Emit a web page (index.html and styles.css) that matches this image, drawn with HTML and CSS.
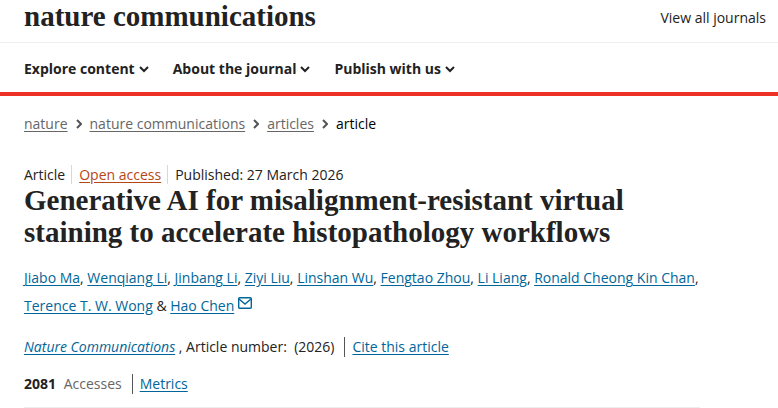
FILE: index.html
```
<!DOCTYPE html>
<html lang="en">
<head>
	<meta charset="utf-8">
	<meta name="viewport" content="width=device-width, initial-scale=1">
	<title>Generative AI for misalignment-resistant virtual staining to accelerate histopathology workflows | Nature Communications</title>
	<link rel="stylesheet" href="styles.css">
</head>
<body>
	<header class="header">
		<div class="header-top">
			<a class="logo" href="#">nature communications</a>
			<a class="all-journals" href="#">View all journals</a>
		</div>
		<nav class="header-menu">
			<button type="button" class="menu-button">Explore content
				<svg class="menu-chevron" viewBox="0 0 10 7" aria-hidden="true"><path d="M1 1l4 4 4-4"/></svg>
			</button>
			<button type="button" class="menu-button">About the journal
				<svg class="menu-chevron" viewBox="0 0 10 7" aria-hidden="true"><path d="M1 1l4 4 4-4"/></svg>
			</button>
			<button type="button" class="menu-button">Publish with us
				<svg class="menu-chevron" viewBox="0 0 10 7" aria-hidden="true"><path d="M1 1l4 4 4-4"/></svg>
			</button>
		</nav>
	</header>

	<nav class="breadcrumbs" aria-label="breadcrumbs">
		<a href="#">nature</a>
		<svg class="crumb-chevron" viewBox="0 0 6 10" aria-hidden="true"><path d="M1 1l4 4-4 4"/></svg>
		<a href="#">nature communications</a>
		<svg class="crumb-chevron" viewBox="0 0 6 10" aria-hidden="true"><path d="M1 1l4 4-4 4"/></svg>
		<a href="#">articles</a>
		<svg class="crumb-chevron" viewBox="0 0 6 10" aria-hidden="true"><path d="M1 1l4 4-4 4"/></svg>
		<span class="crumb-current">article</span>
	</nav>

	<main class="article">
		<ul class="identifiers">
			<li>Article</li>
			<li><a class="open-access" href="#">Open access</a></li>
			<li>Published: <time datetime="2026-03-27">27 March 2026</time></li>
		</ul>
		<h1 class="title">Generative AI for misalignment-resistant virtual staining to accelerate histopathology workflows</h1>
		<p class="authors">
			<a href="#">Jiabo Ma</a>, <a href="#">Wenqiang Li</a>, <a href="#">Jinbang Li</a>, <a href="#">Ziyi Liu</a>, <a href="#">Linshan Wu</a>, <a href="#">Fengtao Zhou</a>, <a href="#">Li Liang</a>, <a href="#">Ronald Cheong Kin Chan</a>, <a href="#">Terence T. W. Wong</a> &amp; <a href="#">Hao Chen</a><svg class="mail" viewBox="0 0 14 12" aria-hidden="true"><rect x="0.7" y="0.7" width="12.6" height="10.6" rx="1"/><path d="M1 2l6 5 6-5"/></svg>
		</p>
		<div class="info">
			<p><a href="#"><i>Nature Communications</i></a> , Article number:&nbsp; (2026)</p>
			<span class="info-link"><a href="#">Cite this article</a></span>
		</div>
		<div class="info">
			<p><strong>2081</strong> <span class="metrics-label">Accesses</span></p>
			<span class="info-link"><a href="#">Metrics</a></span>
		</div>
	</main>
</body>
</html>
```
FILE: styles.css
```
* {
	box-sizing: border-box;
}
body {
	margin: 0;
	color: #222;
	background: #fff;
	font: 14px/20px "Open Sans", "Noto Sans", sans-serif;
}
p,
ul,
h1 {
	margin: 0;
	padding: 0;
}
a {
	color: #069;
	text-underline-offset: 2px;
}
svg {
	fill: none;
	stroke: currentColor;
}

/* header */
.header {
	border-bottom: 4px solid #ed3125;
}
.header-top {
	display: flex;
	justify-content: space-between;
	align-items: center;
	height: 43px;
	padding: 0 12px 6px 24px;
	border-bottom: 1px solid #eee;
}
.logo {
	color: #222;
	padding-bottom: 4px;
	font: bold 29px/32px "Liberation Serif", serif;
	text-decoration: none;
}
.all-journals {
	color: #222;
	text-decoration: none;
}
.header-menu {
	display: flex;
	gap: 24px;
	padding: 16px 24px 13px;
}
.menu-button {
	display: flex;
	align-items: center;
	gap: 4px;
	padding: 0;
	border: 0;
	background: none;
	color: #222;
	font: bold 14px/20px "Open Sans", "Noto Sans", sans-serif;
	cursor: pointer;
}
.menu-chevron {
	width: 10px;
	height: 7px;
	stroke-width: 2;
}

/* breadcrumbs */
.breadcrumbs {
	display: flex;
	align-items: center;
	padding: 18px 24px;
	color: #000;
}
.breadcrumbs a {
	color: #666;
}
.crumb-chevron {
	width: 6px;
	height: 10px;
	margin: 0 8px;
	color: #555;
	stroke-width: 2;
}

/* article head */
.article {
	max-width: 676px;
	margin: 13px 0 0 24px;
	border-bottom: 1px solid #eee;
}
.identifiers {
	display: flex;
	line-height: 19px;
	list-style: none;
}
.identifiers li + li {
	margin-left: 6px;
	padding-left: 7px;
	border-left: 1px solid #cedbe0;
}
.open-access {
	color: #b74616;
}
.title {
	font: bold 29px/32px "Liberation Serif", serif;
}
.authors {
	margin: 16px 0 17px;
	line-height: 28px;
}
.mail {
	width: 14px;
	height: 12px;
	margin-left: 4px;
	color: #069;
	stroke-width: 1.4;
	vertical-align: 2px;
}
.info {
	display: flex;
	margin-bottom: 17px;
}
.info:last-child {
	margin-bottom: 13px;
}
.info-link {
	margin-left: 10px;
	padding-left: 7px;
	border-left: 1px solid #555;
}
.metrics-label {
	margin-left: 4px;
	color: #666;
}
```
